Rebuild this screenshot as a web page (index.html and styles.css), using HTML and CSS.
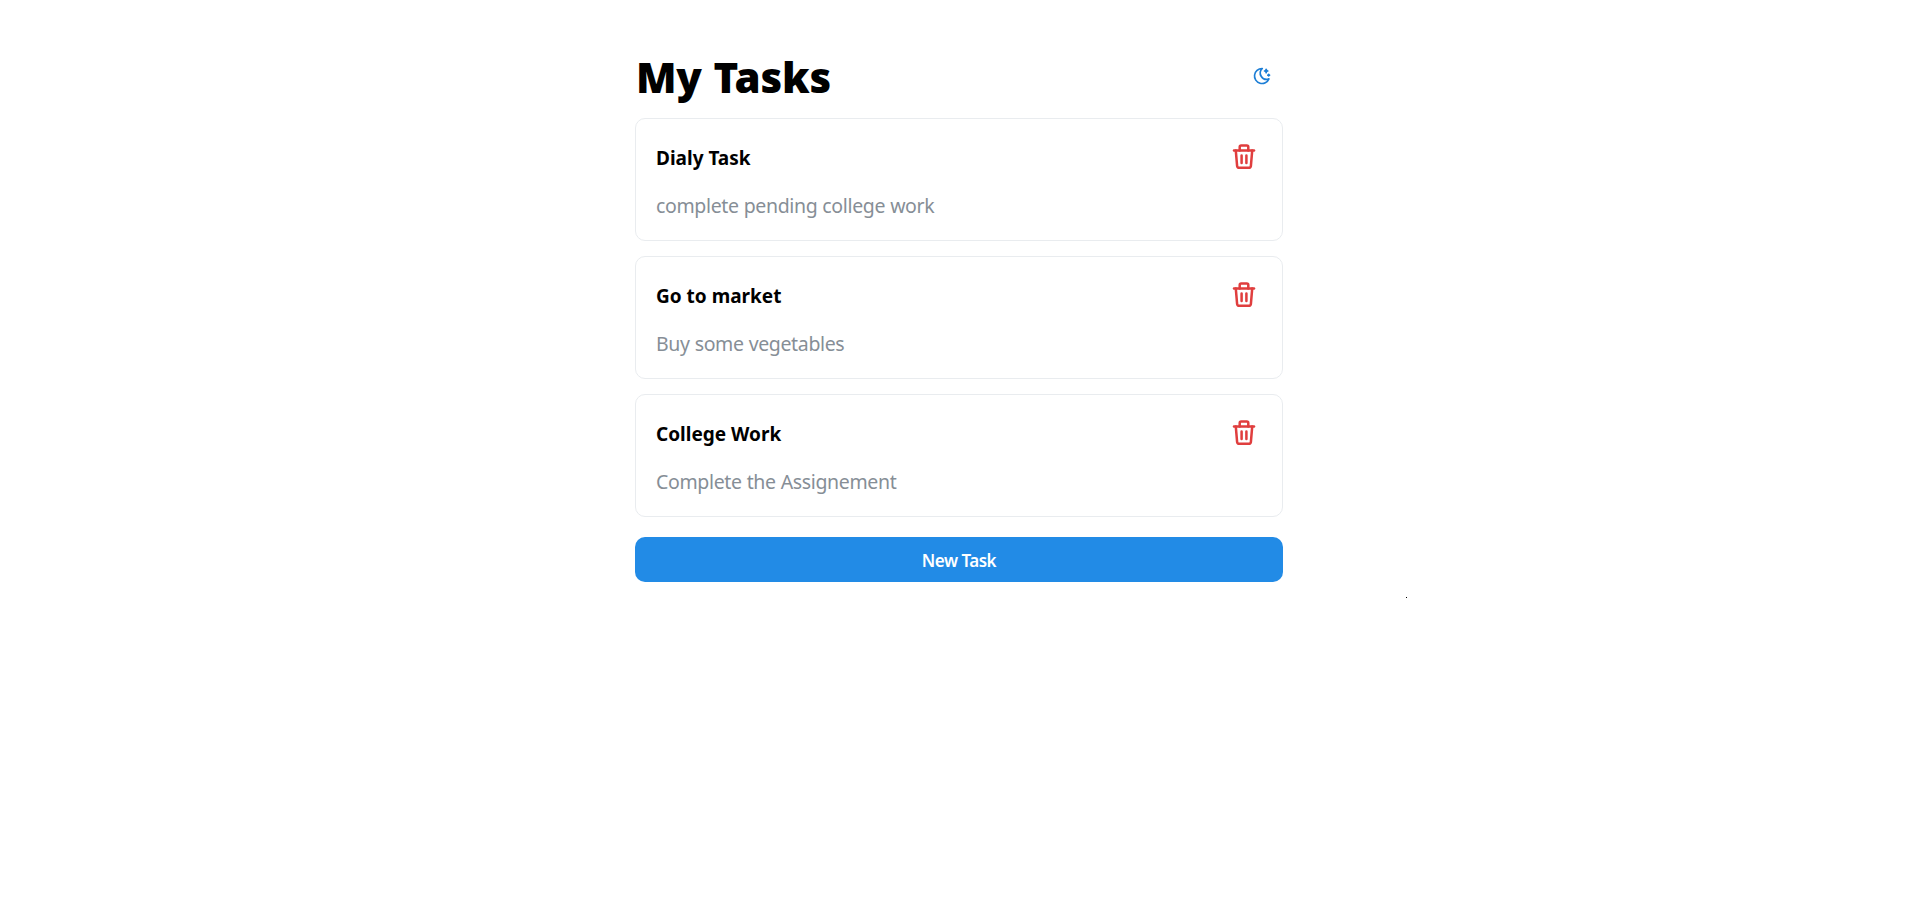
FILE: index.html
```html
<!DOCTYPE html>
<html lang="en">
<head>
<meta charset="utf-8">
<title>My Tasks</title>
<link rel="stylesheet" href="styles.css">
</head>
<body>
<svg class="sprite" aria-hidden="true">
  <symbol id="trash" viewBox="0 0 24 28">
    <g fill="none" stroke="currentColor" stroke-width="2.5" stroke-linecap="round" stroke-linejoin="round">
      <path d="M2 7.6h20"/>
      <path d="M3.8 7.6l1.3 15.2a2.2 2.2 0 0 0 2.2 2h9.4a2.2 2.2 0 0 0 2.2-2l1.3-15.2"/>
      <path d="M7.7 7.6V4a1.5 1.5 0 0 1 1.5-1.5h5.6A1.5 1.5 0 0 1 16.3 4v3.6"/>
      <path d="M9.6 12.6v7.4M14.4 12.6v7.4"/>
    </g>
  </symbol>
</svg>
<main class="container">
  <header class="header">
    <h1 class="title">My Tasks</h1>
    <button class="theme" aria-label="Toggle theme">
      <svg class="moon" viewBox="0 0 24 24" fill="none" stroke="currentColor" stroke-width="2" stroke-linecap="round" stroke-linejoin="round">
        <path d="M12 3c.132 0 .263 0 .393 0a7.5 7.5 0 0 0 7.92 12.446a9 9 0 1 1 -8.313 -12.454z"/>
        <path d="M17 4a2 2 0 0 0 2 2a2 2 0 0 0 -2 2a2 2 0 0 0 -2 -2a2 2 0 0 0 2 -2"/>
        <path d="M19 11h2m-1 -1v2"/>
      </svg>
    </button>
  </header>
  <section class="list">
    <article class="card">
      <div class="row"><h2 class="name">Dialy Task</h2><button class="delete" aria-label="Delete"><svg class="bin"><use href="#trash"/></svg></button></div>
      <p class="summary">complete pending college work</p>
    </article>
    <article class="card">
      <div class="row"><h2 class="name">Go to market</h2><button class="delete" aria-label="Delete"><svg class="bin"><use href="#trash"/></svg></button></div>
      <p class="summary">Buy some vegetables</p>
    </article>
    <article class="card">
      <div class="row"><h2 class="name">College Work</h2><button class="delete" aria-label="Delete"><svg class="bin"><use href="#trash"/></svg></button></div>
      <p class="summary">Complete the Assignement</p>
    </article>
  </section>
  <button class="new">New Task</button>
</main>
<span class="speck"></span>
</body>
</html>
```

FILE: styles.css
```css
* { box-sizing: border-box; }
body { margin: 0; background: #fff; color: #000; font-family: "Segoe UI", "Noto Sans", sans-serif; }
button { border: 0; padding: 0; background: transparent; font-family: inherit; }
.sprite { display: none; }
.container { width: 648px; margin: 0 auto; padding-top: 48px; }
.header { display: flex; justify-content: space-between; height: 70px; padding-right: 11px; }
.title { margin: 0; padding-left: 1px; font-size: 42px; line-height: 58px; font-weight: 900; letter-spacing: -0.25px; word-spacing: 1px; }
.theme { width: 20px; height: 20px; margin-top: 18px; color: #1c7ed6; }
.moon { display: block; width: 20px; height: 20px; }
.list { display: grid; gap: 15px; }
.card { height: 123px; border: 1px solid #e9ecef; border-radius: 10px; padding: 21px 26px 0 20px; }
.row { display: flex; justify-content: space-between; height: 36px; }
.name { margin: 0; font-size: 19px; line-height: 36px; font-weight: 700; letter-spacing: 0; }
.delete { height: 28px; margin-top: 3px; color: #e03e3e; }
.bin { display: block; width: 24px; height: 28px; }
.summary { margin: 15px 0 0; color: #868e96; font-size: 19.5px; line-height: 30px; letter-spacing: -0.35px; word-spacing: 0.3px; }
.new { display: block; width: 100%; height: 45px; margin-top: 20px; padding-top: 2px; border-radius: 10px; background: #228be6; color: #fff; font-size: 17px; line-height: 43px; font-weight: 600; letter-spacing: -0.5px; }
.speck { position: absolute; left: 1406px; top: 597px; width: 1px; height: 1px; background: #000; }
```
